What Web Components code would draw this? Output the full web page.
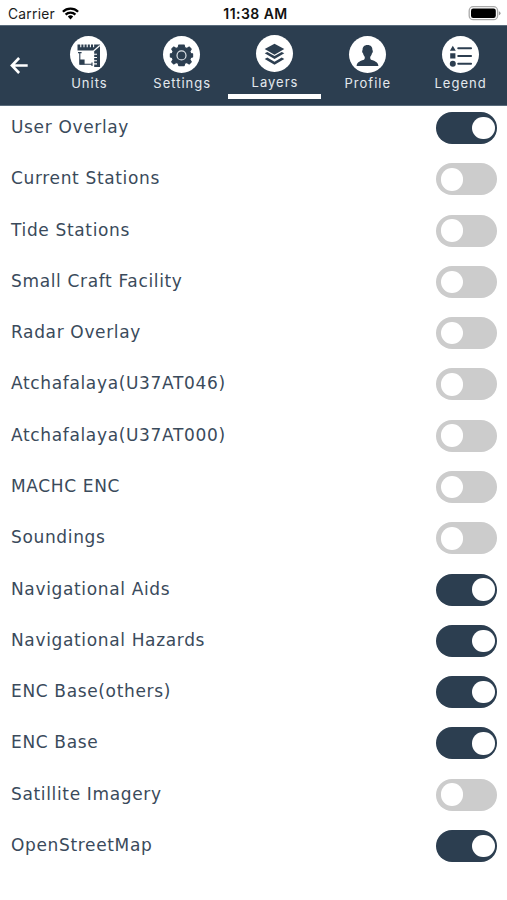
<!DOCTYPE html>
<html lang="en">
<head>
<meta charset="utf-8">
<meta name="viewport" content="width=device-width">
<title>Layers</title>
<style>
html,body{margin:0;background:#fff}
body{width:507px;height:900px;overflow:hidden}
</style>
</head>
<body>
<layers-screen></layers-screen>
<script>
const define = (name, html, setup) => customElements.define(name, class extends HTMLElement {
  connectedCallback() {
    if (this.shadowRoot) return;
    this.attachShadow({ mode: 'open' }).innerHTML = html;
    if (setup) setup(this, this.shadowRoot);
  }
});

define('status-bar', `
<style>
:host{display:grid;grid-template-columns:1fr auto 1fr;align-items:center;height:25px;box-sizing:border-box;padding:2px 5px 0 8px;font-family:Inter,"Liberation Sans",sans-serif;color:#1c1c1c}
.left{display:flex;align-items:center;gap:7px;font-size:13.8px;letter-spacing:.25px}
.time{font-size:14px;font-weight:600;letter-spacing:.45px;color:#111;padding-left:1px}
.right{display:flex;justify-content:flex-end}
svg{display:block}
</style>
<div class="left"><span>Carrier</span>
<svg width="17" height="13" viewBox="0 0 17 13" fill="none" stroke="#000" stroke-width="2.3"><path d="M.9 4.700a10.800 10.800 0 0 1 15.200 0M3.600 7.600a7 7 0 0 1 9.800 0"/><path d="M8.500 12.400 5.800 9.600a3.800 3.800 0 0 1 5.400 0z" fill="#000" stroke="none"/></svg></div>
<span class="time">11:38 AM</span>
<div class="right"><svg width="34" height="15" viewBox="0 0 34 15"><rect x="1.2" y=".7" width="28.400" height="13" rx="4" fill="#fff" stroke="#aaa" stroke-width="1.300"/><rect x="3" y="2.500" width="24.800" height="9.500" rx="2.200"/><path d="M30.900 5.300q1.600 .4 1.600 2t-1.600 2z" fill="#999"/></svg></div>`);

const icons = {
  units: `<path d="M7.500 8.500h22.500v22.500h-5.800V15.600l-1.500-1.200H7.500z" fill="#2c3e50"/><path d="M10.800 8v3.200M14 8v3.200M17.200 8v3.200M20.400 8v3.200M23.600 8v3.200M23.800 18.300h3.200M23.800 21.500h3.200M23.800 24.700h3.200M23.800 27.900h3.200" stroke="#fff" stroke-width="1.100"/><path d="m23 15.500 6.800-6" stroke="#fff" stroke-width="1.200"/><path d="M9.800 16.500v11.700h12.400M8 16.600h3.600M22 26.400v3.600" fill="none" stroke="#2c3e50" stroke-width="1.100"/><path d="M9.800 23.500h4.800v5H9.800z" fill="#2c3e50"/>`,
  settings: `<path d="M15.700 8.500h5.600l.7 2.800 2.100.9 2.500-1.600 2.200 2.200-1.500 2.500.9 2.100 2 .5v3.300l-2 .5-.9 2.100 1.500 2.500-2.200 2.200-2.500-1.600-2.100.9-.7 2.500h-5.600l-.7-2.500-2.100-.9-2.500 1.600-2.200-2.200 1.500-2.500-.9-2.100-2-.5v-3.300l2-.5.9-2.100-1.500-2.500 2.200-2.200 2.500 1.600 2.100-.9z" transform="translate(.9 .9) scale(.95)" fill="#2c3e50" stroke="#2c3e50" stroke-width="1.200" stroke-linejoin="round"/><circle cx="18.500" cy="19.400" r="4.500" fill="none" stroke="#dfe4e9" stroke-width="1.200"/>`,
  layers: `<path d="m18.500 8.800 9.800 5.300-9.800 5.600-9.800-5.600z" fill="#2c3e50"/><path d="m8.700 18.300 2.600-1.400 7.200 4.100 7.200-4.100 2.600 1.400-9.800 5.700zM8.700 24l2.600-1.400 7.200 4.100 7.200-4.100 2.600 1.400-9.800 5.700z" fill="#2c3e50"/>`,
  profile: `<path d="M18.500 9c3.500 0 5.100 2.300 4.900 5.100.9.800.4 3-.5 3.400-.4 1.800-1.100 2.500-1.700 3.400 0 1.900.2 2.700 1.700 3.200 4.100 1.500 6.200 2.500 6.500 6H7.600c.3-3.500 2.400-4.500 6.500-6 1.500-.5 1.700-1.300 1.700-3.200-.6-.9-1.300-1.600-1.700-3.400-.9-.4-1.400-2.600-.5-3.400C13.400 11.300 15 9 18.500 9z" fill="#2c3e50"/>`,
  legend: `<path d="m10.800 9.700 3 5H7.900zM8.200 17.200h5.200v5.300H8.200z" fill="#2c3e50"/><circle cx="10.800" cy="27.700" r="3" fill="#2c3e50"/><path d="M16.200 12.200h12.900M16.200 20h12.900M16.200 27.700h12.900" stroke="#2c3e50" stroke-width="1.900" stroke-linecap="round"/>`
};

define('nav-tab', `
<style>
:host{display:flex;flex-direction:column;align-items:center;box-sizing:border-box;height:73px;padding-top:10px;font:13px/16px Inter,"Liberation Sans",sans-serif;color:#e4e9ee}
:host([active]){padding-top:9px;border-bottom:5px solid #fff}
.disc{width:37px;height:37px;border-radius:50%;background:#fff;flex:none}
svg{display:block}
.label{margin-top:2px;letter-spacing:1px;padding-left:1px;white-space:nowrap}
</style>
<div class="disc"><svg width="37" height="37" viewBox="0 0 37 37"></svg></div><span class="label"><slot></slot></span>`,
(host, root) => { root.querySelector('svg').innerHTML = icons[host.getAttribute('icon')]; });

define('nav-bar', `
<style>
:host{display:grid;grid-template-columns:42.500px repeat(5,92.800px);box-sizing:border-box;height:81px;background:#2c3e50;border-top:1px solid #596b7b;border-bottom:1px solid #596b7b}
.back{display:block;margin:30px 0 0 10px}
</style>
<svg class="back" width="20" height="19" viewBox="0 0 20 19" fill="none" stroke="#fff" stroke-width="2.600"><path d="M17.700 9.500H2.500M9.100 2 1.900 9.500 9.100 17"/></svg>
<slot></slot>`);

define('toggle-switch', `
<style>
:host{display:flex;align-items:center;box-sizing:border-box;width:61px;height:32px;border-radius:16px;padding:0 4.500px;background:#ccc}
:host([on]){background:#2c3e50;justify-content:flex-end;padding:0 2.500px}
i{display:block;width:22.500px;height:22.500px;border-radius:50%;background:#fff}
</style><i></i>`);

define('layer-row', `
<style>
:host{display:flex;justify-content:space-between;align-items:center;height:32px}
.name{font:17px/20px "DejaVu Sans",sans-serif;letter-spacing:.650px;color:#3a4a5b;white-space:nowrap;padding-bottom:2px}
</style><span class="name"><slot></slot></span><toggle-switch></toggle-switch>`,
(host, root) => { root.querySelector('toggle-switch').toggleAttribute('on', host.hasAttribute('on')); });

define('layer-list', `
<style>:host{display:flex;flex-direction:column;gap:19.290px;padding:6px 10px 0 11px}</style><slot></slot>`);

define('layers-screen', `
<style>:host{display:block;width:507px;height:900px;overflow:hidden;background:#fff}</style>
<status-bar></status-bar>
<nav-bar>
<nav-tab icon="units">Units</nav-tab><nav-tab icon="settings">Settings</nav-tab><nav-tab icon="layers" active>Layers</nav-tab><nav-tab icon="profile">Profile</nav-tab><nav-tab icon="legend">Legend</nav-tab>
</nav-bar>
<layer-list>
<layer-row on>User Overlay</layer-row>
<layer-row>Current Stations</layer-row>
<layer-row>Tide Stations</layer-row>
<layer-row>Small Craft Facility</layer-row>
<layer-row>Radar Overlay</layer-row>
<layer-row>Atchafalaya(U37AT046)</layer-row>
<layer-row>Atchafalaya(U37AT000)</layer-row>
<layer-row>MACHC ENC</layer-row>
<layer-row>Soundings</layer-row>
<layer-row on>Navigational Aids</layer-row>
<layer-row on>Navigational Hazards</layer-row>
<layer-row on>ENC Base(others)</layer-row>
<layer-row on>ENC Base</layer-row>
<layer-row>Satillite Imagery</layer-row>
<layer-row on>OpenStreetMap</layer-row>
</layer-list>`);
</script>
</body>
</html>
